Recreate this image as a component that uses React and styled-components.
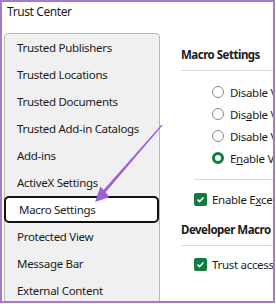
import React from "react";
import styled, { createGlobalStyle } from "styled-components";

const GlobalStyle = createGlobalStyle`
  html, body {
    margin: 0;
    padding: 0;
    background: #ffffff;
  }
  body {
    font-family: "Segoe UI", "Noto Sans", "Liberation Sans", sans-serif;
    color: #1b1b1b;
  }
`;

const Stage = styled.div`
  position: relative;
  width: 276px;
  height: 304px;
  overflow: hidden;
`;

// 画面全体の紫の枠
const Frame = styled.div`
  box-sizing: border-box;
  width: 275px;
  height: 303px;
  border: 2px solid #a57acb;
  overflow: hidden;
  display: flex;
  flex-direction: column;
  background: #fff;
`;

const Title = styled.div`
  height: 19px;
  padding: 0 0 0 5px;
  font-size: 12px;
  letter-spacing: -0.4px;
  line-height: 19px;
  white-space: nowrap;
`;

const Body = styled.div`
  display: flex;
  flex: 1;
  margin-top: 12px;
  min-height: 0;
`;

const SidePanel = styled.div`
  box-sizing: border-box;
  flex: 0 0 155px;
  margin-left: 2px;
  height: 320px;
  background: #f0f0f0;
  border: 1px solid #b8b8b8;
  border-radius: 4px 4px 0 0;
  display: flex;
  flex-direction: column;
`;

const NavItem = styled.div`
  box-sizing: border-box;
  height: 27px;
  margin: 0 0 0 -1px;
  width: 155px;
  padding-left: 13px;
  font-size: 11.5px;
  letter-spacing: -0.3px;
  line-height: ${(p) => (p.$active ? "23px" : "27px")};
  white-space: nowrap;
  background: ${(p) => (p.$active ? "#ffffff" : "transparent")};
  border: ${(p) => (p.$active ? "2px solid #111" : "none")};
  border-radius: 5px;
`;

const Content = styled.div`
  flex: 1;
  min-width: 0;
  padding: 13px 0 0 21px;
  display: flex;
  flex-direction: column;
  overflow: hidden;
`;

const SectionTitle = styled.div`
  font-size: 11.5px;
  font-weight: 700;
  letter-spacing: -0.5px;
  line-height: 18px;
  white-space: nowrap;
`;

const Divider = styled.div`
  height: 1px;
  background: #d9d9d9;
  margin: ${(p) => p.$margin || "6px 0 0 0"};
`;

const OptionList = styled.div`
  display: flex;
  flex-direction: column;
  padding: 10px 0 0 31px;
`;

const OptionRow = styled.div`
  display: flex;
  align-items: center;
  gap: 6px;
  height: 22px;
  font-size: 11.5px;
  letter-spacing: -0.3px;
  white-space: nowrap;
`;

const Radio = styled.span`
  box-sizing: border-box;
  flex: 0 0 12px;
  width: 12px;
  height: 12px;
  border-radius: 50%;
  background: #fff;
  border: ${(p) => (p.$checked ? "3.5px solid #107c41" : "1px solid #8a8a8a")};
`;

const CheckRow = styled.div`
  display: flex;
  align-items: center;
  gap: 5px;
  height: 22px;
  padding-left: 13px;
  margin-top: ${(p) => p.$top || "0"};
  font-size: 11.5px;
  letter-spacing: -0.3px;
  white-space: nowrap;
`;

const CheckBox = styled.span`
  flex: 0 0 13px;
  width: 13px;
  height: 13px;
  border-radius: 2px;
  background: #107c41;
  display: flex;
  align-items: center;
  justify-content: center;
`;

const SubTitle = styled(SectionTitle)`
  margin-top: 11px;
`;

const Overlay = styled.svg`
  position: absolute;
  left: 0;
  top: 0;
  pointer-events: none;
`;

const navItems = [
  "Trusted Publishers",
  "Trusted Locations",
  "Trusted Documents",
  "Trusted Add-in Catalogs",
  "Add-ins",
  "ActiveX Settings",
  "Macro Settings",
  "Protected View",
  "Message Bar",
  "External Content",
];

const Check = () => (
  <svg width="9" height="9" viewBox="0 0 9 9">
    <path d="M1.5 4.6 L3.6 6.6 L7.5 2.4" fill="none" stroke="#fff" strokeWidth="1.5" />
  </svg>
);

const App = () => {
  return (
    <Stage>
      <GlobalStyle />
      <Frame>
        <Title>Trust Center</Title>
        <Body>
          <SidePanel>
            {navItems.map((item) => (
              <NavItem key={item} $active={item === "Macro Settings"}>
                {item}
              </NavItem>
            ))}
          </SidePanel>
          <Content>
            <SectionTitle>Macro Settings</SectionTitle>
            <Divider />
            <OptionList>
              <OptionRow>
                <Radio />
                Disable VBA macros without notification
              </OptionRow>
              <OptionRow>
                <Radio />
                <span>
                  Dis<u>a</u>ble VBA macros with notification
                </span>
              </OptionRow>
              <OptionRow>
                <Radio />
                Disable VBA macros except digitally signed macros
              </OptionRow>
              <OptionRow>
                <Radio $checked />
                <span>
                  E<u>n</u>able VBA macros (not recommended)
                </span>
              </OptionRow>
            </OptionList>
            <Divider $margin="10px 0 0 13px" />
            <CheckRow $top="8px">
              <CheckBox>
                <Check />
              </CheckBox>
              <span>
                Enable E<u>x</u>cel 4.0 macros when VBA macros are enabled
              </span>
            </CheckRow>
            <SubTitle>Developer Macro Settings</SubTitle>
            <Divider />
            <CheckRow $top="7px">
              <CheckBox>
                <Check />
              </CheckBox>
              Trust access to the VBA project object model
            </CheckRow>
          </Content>
        </Body>
      </Frame>
      <Overlay width="276" height="304" viewBox="0 0 276 304">
        <polygon
          points="162.4,125.4 161.6,124.6 103.1,190.4 105.3,192.4"
          fill="#9b5fd6"
        />
        <polygon points="95,202 109.5,197 100.5,186.5" fill="#9b5fd6" />
      </Overlay>
    </Stage>
  );
};

export default App;
